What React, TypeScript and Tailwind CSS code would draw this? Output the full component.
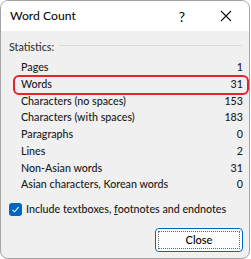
import React from 'react';

const STATS: { label: string; value: string; highlight?: boolean }[] = [
  { label: 'Pages', value: '1' },
  { label: 'Words', value: '31', highlight: true },
  { label: 'Characters (no spaces)', value: '153' },
  { label: 'Characters (with spaces)', value: '183' },
  { label: 'Paragraphs', value: '0' },
  { label: 'Lines', value: '2' },
  { label: 'Non-Asian words', value: '31' },
  { label: 'Asian characters, Korean words', value: '0' },
];

const App: React.FC = () => (
  <div className="w-[251px] h-[259px] bg-white text-[#1b1b1b]" style={{ fontFamily: 'Lato, "Noto Sans", sans-serif' }}>
    <div className="w-[250px] h-[259px] border border-[#a3a3a3] rounded-[8px] overflow-hidden flex flex-col bg-[#f0f0f0]">
      {/* title bar */}
      <div className="h-[30px] bg-white flex items-center pl-[9px] shrink-0">
        <span className="text-[12.2px] text-black flex-1 pt-[1px]">Word Count</span>
        <span className="text-[14px] text-black w-[20px] text-center mr-[28px]">?</span>
        <svg width="12" height="12" viewBox="0 0 12 12" className="mr-[17px]">
          <path d="M1 1 L11 11 M11 1 L1 11" stroke="#111" strokeWidth="1.1" />
        </svg>
      </div>

      <div className="flex-1 flex flex-col text-[10.7px] font-medium">
        <div className="flex items-center pl-[8px] pr-[7px] pt-[8px] leading-[16px]">
          <span className="text-[#333]">Statistics:</span>
          <div className="flex-1 h-px bg-[#dadada] ml-[5px] mt-[-3px]" />
        </div>

        <div className="flex flex-col pl-[20px] pr-[6px] mt-[4px]">
          {STATS.map((s) => (
            <div key={s.label} className="relative flex justify-between leading-[16.75px]">
              <span>{s.label}</span>
              <span>{s.value}</span>
              {s.highlight && (
                <div className="absolute left-[-8px] right-[-6px] top-[-1px] bottom-[-2px] border-2 border-[#e3242b] rounded-[6px]" />
              )}
            </div>
          ))}
        </div>

        <div className="flex items-center pl-[8px] mt-[8px]">
          <div className="w-[13px] h-[13px] rounded-[3px] bg-[#0067c0] flex items-center justify-center shrink-0">
            <svg width="9" height="9" viewBox="0 0 9 9">
              <path d="M1.5 4.8 L3.6 6.8 L7.6 2.2" fill="none" stroke="white" strokeWidth="1.1" />
            </svg>
          </div>
          <span className="ml-[4px] whitespace-nowrap leading-[16px]">
            Include textboxes, <span className="underline">f</span>ootnotes and endnotes
          </span>
        </div>

        <div className="flex justify-end pr-[6px] mt-[11px]">
          <button className="w-[88px] h-[24px] bg-[#fdfdfd] border border-[#0067c0] rounded-[4px] p-[2px]">
            <div className="w-full h-full border border-dotted border-[#666] flex items-center justify-center text-[11px] text-black">
              Close
            </div>
          </button>
        </div>
      </div>
    </div>
  </div>
);

export default App;
